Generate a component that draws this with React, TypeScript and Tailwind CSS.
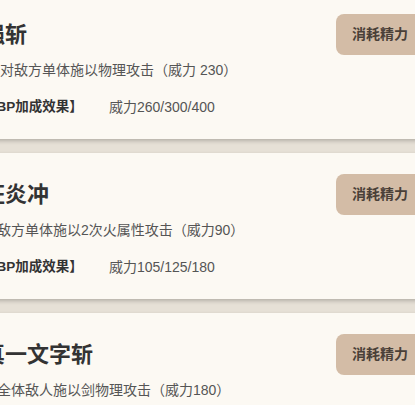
import React from 'react'

interface Skill {
    name: string;
    desc: string;
    descIndent?: boolean;
    bonus?: string;
}

const skills: Skill[] = [
    {
        name: "强斩",
        desc: "对敌方单体施以物理攻击（威力 230）",
        descIndent: true,
        bonus: "威力260/300/400",
    },
    {
        name: "狂炎冲",
        desc: "对敌方单体施以2次火属性攻击（威力90）",
        bonus: "威力105/125/180",
    },
    {
        name: "真一文字斩",
        desc: "对全体敌人施以剑物理攻击（威力180）",
        bonus: "威力200/240/300",
    },
]

const SkillCard = ({ skill }: { skill: Skill }) => {
    return (
        <div className="bg-[#fcf9f3] pt-[21px] pb-[21px] pl-[20px] pr-[20px] shadow-[0_2px_4px_rgba(0,0,0,0.22)]">
            <div className="flex items-center justify-between h-[41px]">
                <h3 className="text-[22px] font-bold text-[#333333] leading-none">{skill.name}</h3>
                <button className="h-[41px] px-[16px] rounded-[8px] bg-[#d3bca6] text-[14px] font-bold text-[#4a4038]">
                    消耗精力
                </button>
            </div>
            <p className={`mt-[4px] text-[14px] leading-[22px] text-[#555555] ${skill.descIndent ? 'pl-[17px]' : ''}`}>
                {skill.desc}
            </p>
            <div className="mt-[15px] flex items-center leading-[22px]">
                <span className="w-[126px] text-[13.5px] font-bold text-[#333333]">【BP加成效果】</span>
                <span className="text-[14px] text-[#555555]">{skill.bonus}</span>
            </div>
        </div>
    )
}

const App = () => {
    return (
        <div
            className="w-[415px] h-[405px] overflow-hidden bg-[#e6e0d6]"
            style={{ fontFamily: '"Liberation Sans", "Noto Sans CJK SC", sans-serif' }}
        >
            <div className="flex flex-col gap-[14px] -mt-[7px] -ml-[37px] w-[481px]">
                {skills.map((s) => (
                    <SkillCard key={s.name} skill={s} />
                ))}
            </div>
        </div>
    )
}

export default App
